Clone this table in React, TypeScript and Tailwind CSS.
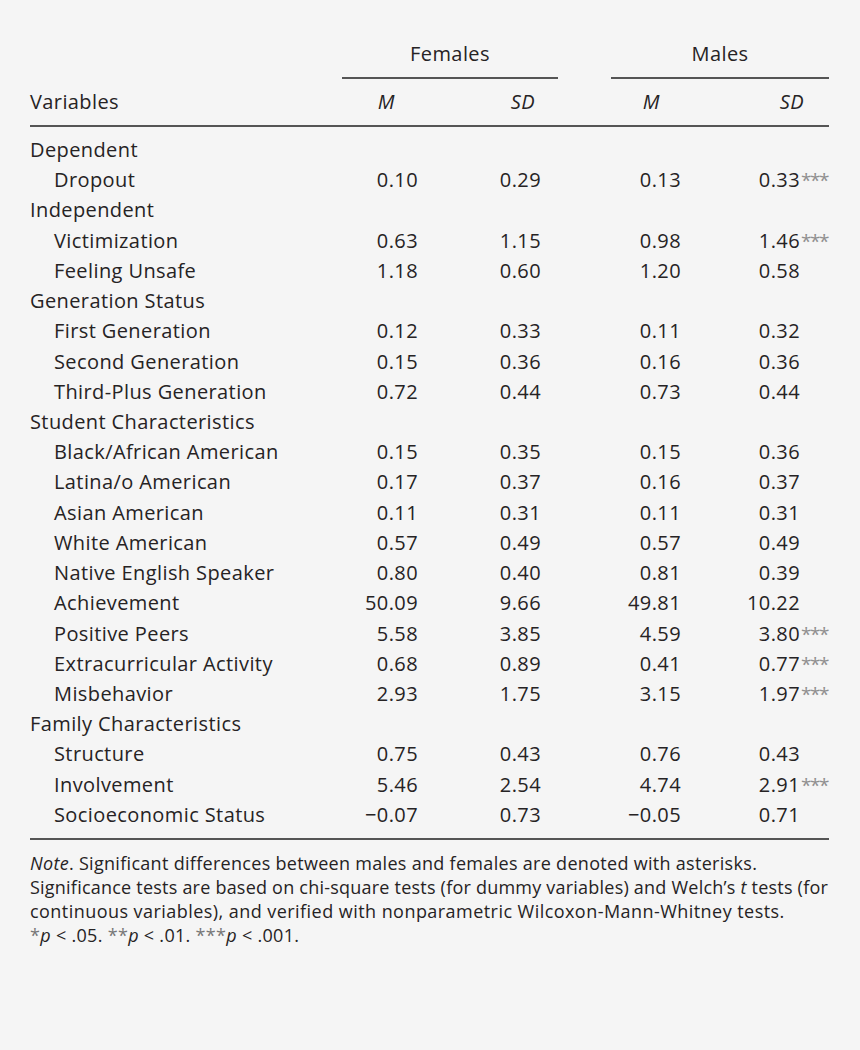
type Row = {
  label: string;
  group?: boolean;
  v?: [string, string, string, string];
  sig?: boolean;
};

const rows: Row[] = [
  { label: "Dependent", group: true },
  { label: "Dropout", v: ["0.10", "0.29", "0.13", "0.33"], sig: true },
  { label: "Independent", group: true },
  { label: "Victimization", v: ["0.63", "1.15", "0.98", "1.46"], sig: true },
  { label: "Feeling Unsafe", v: ["1.18", "0.60", "1.20", "0.58"] },
  { label: "Generation Status", group: true },
  { label: "First Generation", v: ["0.12", "0.33", "0.11", "0.32"] },
  { label: "Second Generation", v: ["0.15", "0.36", "0.16", "0.36"] },
  { label: "Third-Plus Generation", v: ["0.72", "0.44", "0.73", "0.44"] },
  { label: "Student Characteristics", group: true },
  { label: "Black/African American", v: ["0.15", "0.35", "0.15", "0.36"] },
  { label: "Latina/o American", v: ["0.17", "0.37", "0.16", "0.37"] },
  { label: "Asian American", v: ["0.11", "0.31", "0.11", "0.31"] },
  { label: "White American", v: ["0.57", "0.49", "0.57", "0.49"] },
  { label: "Native English Speaker", v: ["0.80", "0.40", "0.81", "0.39"] },
  { label: "Achievement", v: ["50.09", "9.66", "49.81", "10.22"] },
  { label: "Positive Peers", v: ["5.58", "3.85", "4.59", "3.80"], sig: true },
  { label: "Extracurricular Activity", v: ["0.68", "0.89", "0.41", "0.77"], sig: true },
  { label: "Misbehavior", v: ["2.93", "1.75", "3.15", "1.97"], sig: true },
  { label: "Family Characteristics", group: true },
  { label: "Structure", v: ["0.75", "0.43", "0.76", "0.43"] },
  { label: "Involvement", v: ["5.46", "2.54", "4.74", "2.91"], sig: true },
  { label: "Socioeconomic Status", v: ["\u22120.07", "0.73", "\u22120.05", "0.71"] },
];

function Stars() {
  return (
    <span className="absolute left-[calc(100%+1px)] top-[5px] leading-none text-[19px] tracking-[-1.5px] text-[#8f8f8f]">***</span>
  );
}

export default function App() {
  return (
    <div className="w-[860px] h-[1050px] bg-[#f5f5f5] text-[#262324] font-['Open_Sans','Lato',sans-serif]">
      <div className="pt-[39px] pl-[30px] w-[829px] text-[20px] tracking-[0.4px]">
        {/* group header */}
        <div className="flex h-[30px] leading-[30px]">
          <div className="w-[312px]" />
          <div className="w-[216px] text-center">Females</div>
          <div className="w-[53px]" />
          <div className="w-[218px] text-center">Males</div>
        </div>
        <div className="flex mt-[8px]">
          <div className="w-[312px]" />
          <div className="w-[216px] h-[1.5px] bg-[#555]" />
          <div className="w-[53px]" />
          <div className="w-[218px] h-[1.5px] bg-[#555]" />
        </div>
        <div className="flex h-[30px] leading-[30px] mt-[8.5px] italic">
          <div className="w-[312px] not-italic">Variables</div>
          <div className="w-[53px] text-right">M</div>
          <div className="w-[140px] text-right">SD</div>
          <div className="w-[125px] text-right">M</div>
          <div className="w-[144px] text-right">SD</div>
        </div>
        <div className="mt-[8px] h-[1.5px] bg-[#555] w-[799px]" />

        <div className="mt-[8.5px]">
          {rows.map((r) => (
            <div key={r.label} className="flex h-[30.23px] leading-[30.23px]">
              <div className={r.group ? "w-[312px]" : "w-[312px] pl-[24px]"}>{r.label}</div>
              {r.v && (
                <>
                  <div className="w-[76px] text-right">{r.v[0]}</div>
                  <div className="w-[123px] text-right">{r.v[1]}</div>
                  <div className="w-[140px] text-right">{r.v[2]}</div>
                  <div className="w-[119px] text-right">
                    <span className="relative">
                      {r.v[3]}
                      {r.sig && <Stars />}
                    </span>
                  </div>
                </>
              )}
            </div>
          ))}
        </div>
        <div className="mt-[8px] h-[1.5px] bg-[#555] w-[799px]" />

        <div className="mt-[11px] text-[18px] leading-[24px] tracking-[0.3px] whitespace-nowrap">
          <p>
            <i>Note</i>. Significant differences between males and females are denoted with asterisks.
          </p>
          <p className="tracking-[0.22px]">
            Significance tests are based on chi-square tests (for dummy variables) and Welch’s <i>t</i> tests (for
          </p>
          <p className="tracking-[0.45px]">continuous variables), and verified with nonparametric Wilcoxon-Mann-Whitney tests.</p>
          <p>
            <span className="text-[#777]">*</span>
            <i>p</i> &lt; .05. <span className="text-[#777]">**</span>
            <i>p</i> &lt; .01. <span className="text-[#777]">***</span>
            <i>p</i> &lt; .001.
          </p>
        </div>
      </div>
    </div>
  );
}
